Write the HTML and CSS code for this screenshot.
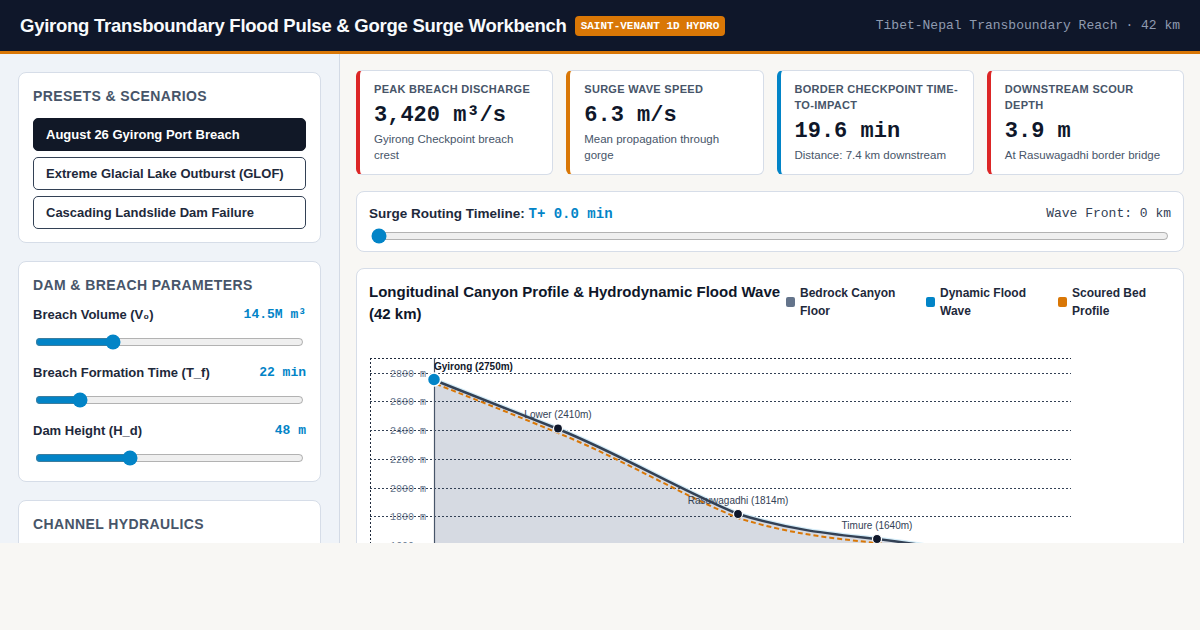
FILE: index.html
```html
<!DOCTYPE html>
<html>
<head>
  <link rel="stylesheet" href="styles.css">
</head>
<body>
  <div class="app">
    <header class="topbar">
      <div class="brand">
        <h1>Gyirong Transboundary Flood Pulse &amp; Gorge Surge Workbench</h1>
        <span class="badge">SAINT-VENANT 1D HYDRO</span>
      </div>
      <div class="reach">Tibet-Nepal Transboundary Reach · 42 km</div>
    </header>

    <div class="workspace">
      <aside class="sidebar">
        <section class="panel">
          <h2>Presets &amp; Scenarios</h2>
          <div class="preset-list">
            <button class="preset active">August 26 Gyirong Port Breach</button>
            <button class="preset">Extreme Glacial Lake Outburst (GLOF)</button>
            <button class="preset">Cascading Landslide Dam Failure</button>
          </div>
        </section>

        <section class="panel">
          <h2>Dam &amp; Breach Parameters</h2>
          <div class="param">
            <div class="param-head">
              <label>Breach Volume (V₀)</label>
              <span class="param-value">14.5M m³</span>
            </div>
            <input type="range" min="1" max="50" step="0.5" value="14.5">
          </div>
          <div class="param">
            <div class="param-head">
              <label>Breach Formation Time (T_f)</label>
              <span class="param-value">22 min</span>
            </div>
            <input type="range" min="5" max="120" value="22">
          </div>
          <div class="param">
            <div class="param-head">
              <label>Dam Height (H_d)</label>
              <span class="param-value">48 m</span>
            </div>
            <input type="range" min="10" max="120" value="48">
          </div>
        </section>

        <section class="panel">
          <h2>Channel Hydraulics</h2>
          <div class="param">
            <div class="param-head">
              <label>Manning Roughness (n)</label>
              <span class="param-value">0.045</span>
            </div>
            <input type="range" min="0.02" max="0.1" step="0.005" value="0.045">
          </div>
          <div class="param">
            <div class="param-head">
              <label>Gorge Width (B)</label>
              <span class="param-value">38 m</span>
            </div>
            <input type="range" min="10" max="120" value="38">
          </div>
        </section>
      </aside>

      <main class="main">
        <div class="metrics">
          <div class="metric red">
            <div class="metric-label">Peak Breach Discharge</div>
            <div class="metric-value">3,420 m³/s</div>
            <div class="metric-sub">Gyirong Checkpoint breach crest</div>
          </div>
          <div class="metric orange">
            <div class="metric-label">Surge Wave Speed</div>
            <div class="metric-value">6.3 m/s</div>
            <div class="metric-sub">Mean propagation through gorge</div>
          </div>
          <div class="metric blue">
            <div class="metric-label">Border Checkpoint Time-to-Impact</div>
            <div class="metric-value">19.6 min</div>
            <div class="metric-sub">Distance: 7.4 km downstream</div>
          </div>
          <div class="metric red">
            <div class="metric-label">Downstream Scour Depth</div>
            <div class="metric-value">3.9 m</div>
            <div class="metric-sub">At Rasuwagadhi border bridge</div>
          </div>
        </div>

        <div class="timeline">
          <div class="timeline-head">
            <div class="timeline-title">Surge Routing Timeline: <span class="time-readout">T+ 0.0 min</span></div>
            <div class="wave-front">Wave Front: 0 km</div>
          </div>
          <input type="range" min="0" max="60" step="0.5" value="0">
        </div>

        <div class="chart-card">
          <div class="chart-head">
            <h3>Longitudinal Canyon Profile &amp; Hydrodynamic Flood Wave (42 km)</h3>
            <div class="legend">
              <div class="legend-item"><span class="swatch slate"></span>Bedrock Canyon Floor</div>
              <div class="legend-item"><span class="swatch sky"></span>Dynamic Flood Wave</div>
              <div class="legend-item"><span class="swatch amber"></span>Scoured Bed Profile</div>
            </div>
          </div>

          <svg class="profile" viewBox="369 340 802 240" width="802" height="240">
            <!-- bedrock fill -->
            <path d="M434 380 C480 398 520 414 558 429 C620 454 680 490 738 514 C790 530 830 534 877 539 C950 548 1010 560 1071 572 L1071 580 L434 580 Z" fill="#d6dae2"/>

            <!-- frame + grid -->
            <line x1="370" y1="358.5" x2="1071" y2="358.5" stroke="#1e293b" stroke-dasharray="2 2"/>
            <line x1="370.5" y1="358" x2="370.5" y2="580" stroke="#1e293b" stroke-dasharray="2 2"/>
            <g class="y-labels">
              <text x="426" y="376.5">2800 m</text>
              <text x="426" y="405">2600 m</text>
              <text x="426" y="434">2400 m</text>
              <text x="426" y="462.5">2200 m</text>
              <text x="426" y="491.5">2000 m</text>
              <text x="426" y="520">1800 m</text>
              <text x="426" y="549">1600 m</text>
            </g>
            <g stroke="#334155" stroke-dasharray="2 2">
              <line x1="370" y1="373.5" x2="1071" y2="373.5"/>
              <line x1="370" y1="401.5" x2="1071" y2="401.5"/>
              <line x1="370" y1="430.5" x2="1071" y2="430.5"/>
              <line x1="370" y1="459.5" x2="1071" y2="459.5"/>
              <line x1="370" y1="488.5" x2="1071" y2="488.5"/>
              <line x1="370" y1="516.5" x2="1071" y2="516.5"/>
              <line x1="370" y1="545.5" x2="1071" y2="545.5"/>
            </g>
            <line x1="434.5" y1="358" x2="434.5" y2="580" stroke="#475569" stroke-width="1.2"/>

            <!-- flood wave (t=0, resting on bed) -->
            <path d="M434 379 C480 397 520 413 558 428 C620 453 680 489 738 513 C790 529 830 533 877 538 C950 547 1010 559 1071 571" fill="none" stroke="#d4ecf8" stroke-width="3"/>
            <!-- scoured bed -->
            <path d="M436 384 C482 402 522 418 558 433 C620 458 680 494 738 518 C790 534 830 538 877 543 C950 552 1010 564 1071 576" fill="none" stroke="#d97706" stroke-width="2" stroke-dasharray="5 3"/>
            <!-- bedrock line -->
            <path d="M434 380 C480 398 520 414 558 429 C620 454 680 490 738 514 C790 530 830 534 877 539 C950 548 1010 560 1071 572" fill="none" stroke="#334155" stroke-width="2.5"/>

            <!-- stations -->
            <circle cx="434" cy="379.5" r="6.5" fill="#0284c7" stroke="#fff" stroke-width="1.5"/>
            <text class="station main-station" x="434" y="370">Gyirong (2750m)</text>
            <circle cx="558" cy="428.5" r="4.5" fill="#0f172a" stroke="#fff" stroke-width="1.2"/>
            <text class="station" x="558" y="418" text-anchor="middle">Lower (2410m)</text>
            <circle cx="738" cy="514" r="4.5" fill="#0f172a" stroke="#fff" stroke-width="1.2"/>
            <text class="station" x="738" y="504" text-anchor="middle">Rasuwagadhi (1814m)</text>
            <circle cx="877" cy="539" r="4.5" fill="#0f172a" stroke="#fff" stroke-width="1.2"/>
            <text class="station" x="877" y="529" text-anchor="middle">Timure (1640m)</text>
          </svg>
        </div>
      </main>
    </div>
  </div>
</body>
</html>
```

FILE: styles.css
```css
* {
  box-sizing: border-box;
  margin: 0;
  padding: 0;
}

body {
  font-family: "Liberation Sans", Arial, sans-serif;
  background: #f8f7f4;
  color: #1e293b;
}

.app {
  height: 543px;
  overflow: hidden;
  display: flex;
  flex-direction: column;
}

/* top bar */
.topbar {
  height: 54px;
  flex: 0 0 54px;
  background: #0f172a;
  border-bottom: 3px solid #d97706;
  display: flex;
  align-items: center;
  justify-content: space-between;
  padding: 0 20px;
}

.brand {
  display: flex;
  align-items: center;
  gap: 8px;
}

.brand h1 {
  font-size: 18.5px;
  font-weight: 700;
  color: #f8fafc;
  letter-spacing: -0.25px;
}

.badge {
  background: #d97706;
  color: #fff;
  font-family: "Liberation Mono", monospace;
  font-size: 11px;
  font-weight: 700;
  padding: 4px 6px;
  border-radius: 4px;
}

.reach {
  font-family: "Liberation Mono", monospace;
  font-size: 13px;
  color: #8f9bb0;
}

.workspace {
  flex: 1;
  display: flex;
  min-height: 0;
}

/* sidebar */
.sidebar {
  flex: 0 0 340px;
  background: #eff3f8;
  border-right: 1px solid #d3dae5;
  padding: 18px;
  display: flex;
  flex-direction: column;
  gap: 18px;
}

.panel {
  background: #fff;
  border: 1px solid #d6dde8;
  border-radius: 8px;
  padding: 14px 14px 13px;
  flex-shrink: 0;
}

.panel h2 {
  font-size: 14px;
  font-weight: 700;
  text-transform: uppercase;
  letter-spacing: 0.4px;
  color: #475569;
  line-height: 18px;
  margin-bottom: 13px;
}

.preset-list {
  display: flex;
  flex-direction: column;
  gap: 6px;
}

.preset {
  height: 33px;
  text-align: left;
  padding: 0 12px;
  font-family: inherit;
  font-size: 13px;
  font-weight: 700;
  color: #1e293b;
  background: #fff;
  border: 1px solid #334155;
  border-radius: 5px;
}

.preset.active {
  background: #111827;
  border-color: #111827;
  color: #fff;
}

.param {
  margin-bottom: 15px;
}

.param:last-child {
  margin-bottom: 0;
}

.param-head {
  display: flex;
  justify-content: space-between;
  align-items: center;
  line-height: 16px;
}

.param-head label {
  font-size: 13px;
  font-weight: 700;
  color: #1e293b;
}

.param-value {
  font-family: "Liberation Mono", monospace;
  font-size: 13px;
  font-weight: 700;
  color: #0284c7;
}

input[type="range"] {
  display: block;
  width: calc(100% - 4px);
  margin: 11px 2px 2px;
  accent-color: #0284c7;
}

/* main area */
.main {
  flex: 1;
  padding: 16px;
  display: flex;
  flex-direction: column;
  gap: 16px;
  min-width: 0;
}

.metrics {
  display: grid;
  grid-template-columns: repeat(4, 1fr);
  gap: 13px;
}

.metric {
  background: #fff;
  border: 1px solid #d6dde8;
  border-left: 4px solid #dc2626;
  border-radius: 6px;
  padding: 10px 14px 11px;
}

.metric.orange { border-left-color: #d97706; }
.metric.blue { border-left-color: #0284c7; }

.metric-label {
  font-size: 11px;
  font-weight: 700;
  text-transform: uppercase;
  letter-spacing: 0.3px;
  color: #475569;
  line-height: 16px;
}

.metric-value {
  font-family: "Liberation Mono", monospace;
  font-size: 22px;
  font-weight: 700;
  color: #0f172a;
  line-height: 28px;
  margin: 5px 0 1px;
}

.metric-sub {
  font-size: 11.5px;
  color: #475569;
  line-height: 16px;
}

.timeline {
  background: #fff;
  border: 1px solid #d6dde8;
  border-radius: 8px;
  padding: 12px 12px 5px;
}

.timeline-head {
  display: flex;
  justify-content: space-between;
  align-items: center;
  line-height: 20px;
}

.timeline-title {
  font-size: 13.5px;
  font-weight: 700;
  color: #1e293b;
}

.time-readout {
  font-family: "Liberation Mono", monospace;
  font-size: 14px;
  color: #0284c7;
}

.wave-front {
  font-family: "Liberation Mono", monospace;
  font-size: 13px;
  color: #334155;
}

.timeline input[type="range"] {
  margin-top: 4px;
}

.chart-card {
  background: #fff;
  border: 1px solid #d6dde8;
  border-radius: 8px;
  padding: 12px;
  flex-shrink: 0;
}

.chart-head {
  display: flex;
  justify-content: space-between;
  align-items: flex-start;
}

.chart-head h3 {
  flex: 1;
  font-size: 15px;
  font-weight: 700;
  line-height: 22px;
  color: #0f172a;
}

.legend {
  display: flex;
  gap: 16px;
  flex: 0 0 385px;
  padding-top: 3px;
}

.legend-item {
  display: flex;
  align-items: center;
  gap: 5px;
  font-size: 12px;
  font-weight: 700;
  line-height: 18px;
  color: #1e293b;
}

.legend-item:nth-child(1) { width: 124px; }
.legend-item:nth-child(2) { width: 116px; }
.legend-item:nth-child(3) { width: 113px; }

.swatch {
  flex: 0 0 9px;
  width: 9px;
  height: 10px;
  border-radius: 2px;
}

.swatch.slate { background: #64748b; }
.swatch.sky { background: #0284c7; }
.swatch.amber { background: #d97706; }

.profile {
  display: block;
  margin-top: 15px;
}

.y-labels text {
  font-family: "Liberation Mono", monospace;
  font-size: 10px;
  fill: #64748b;
  text-anchor: end;
}

.station {
  font-family: "Liberation Sans", Arial, sans-serif;
  font-size: 10px;
  fill: #334155;
}

.main-station {
  font-weight: 700;
  fill: #0f172a;
}
```
